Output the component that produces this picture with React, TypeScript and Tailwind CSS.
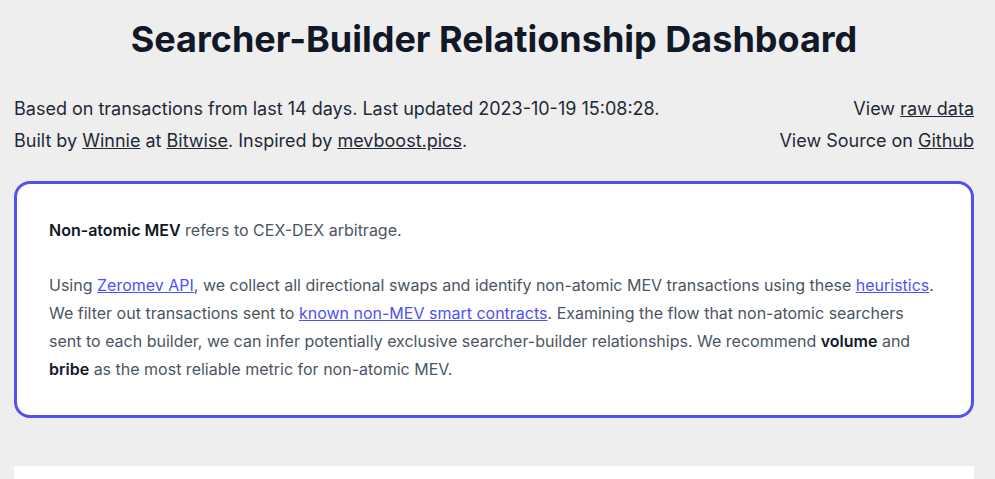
import React from "react";

export default function App() {
  return (
    <div className="min-h-screen bg-[#eeeeee] text-[#111827]" style={{ fontFamily: "Inter, 'Noto Sans', sans-serif" }}>
      <div className="ml-[14px] w-[960px] pt-[15px]">
        <h1 className="text-center text-[36px] font-bold leading-[48px] text-[#111827]">
          Searcher-Builder Relationship Dashboard
        </h1>
        <div className="mt-[30px] flex justify-between text-[18px] leading-[32px] text-[#1f2937]">
          <div>
            <p>Based on transactions from last 14 days. Last updated 2023-10-19 15:08:28.</p>
            <p>
              Built by <a className="underline" href="#">Winnie</a> at <a className="underline" href="#">Bitwise</a>. Inspired by{" "}
              <a className="underline" href="#">mevboost.pics</a>.
            </p>
          </div>
          <div className="text-right">
            <p>
              View <a className="underline" href="#">raw data</a>
            </p>
            <p>
              View Source on <a className="underline" href="#">Github</a>
            </p>
          </div>
        </div>
        <div className="mt-[24px] rounded-2xl border-[3px] border-[#4f51f6] bg-white px-[32px] py-[32px] text-[16px] leading-[28px] text-[#4b5563]">
          <p>
            <span className="font-semibold text-[#111827]">Non-atomic MEV</span> refers to CEX-DEX arbitrage.
          </p>
          <p className="mt-[27px]">
            Using <a className="text-[#4f51f6] underline" href="#">Zeromev API</a>, we collect all directional swaps and identify
            non-atomic MEV transactions using these <a className="text-[#4f51f6] underline" href="#">heuristics</a>. We filter out
            transactions sent to <a className="text-[#4f51f6] underline" href="#">known non-MEV smart contracts</a>. Examining the
            flow that non-atomic searchers sent to each builder, we can infer potentially exclusive searcher-builder relationships.
            We recommend <span className="font-semibold text-[#111827]">volume</span> and{" "}
            <span className="font-semibold text-[#111827]">bribe</span> as the most reliable metric for non-atomic MEV.
          </p>
        </div>
        <div className="mt-[48px] h-[200px] bg-white"></div>
      </div>
    </div>
  );
}
